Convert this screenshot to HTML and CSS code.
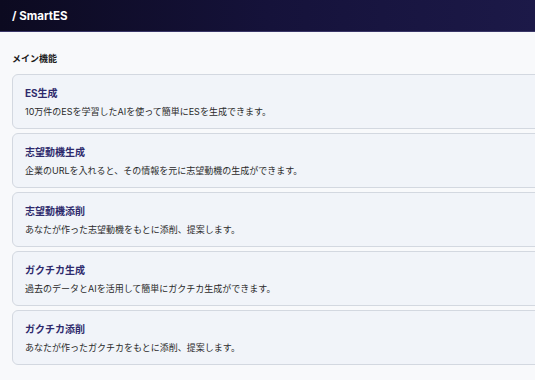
FILE: index.html
```html
<!DOCTYPE html>
<html lang="ja">
<head>
<meta charset="utf-8">
<title>SmartES</title>
<link rel="stylesheet" href="styles.css">
</head>
<body>
<header class="topbar">
  <span class="brand">/ SmartES</span>
</header>
<main class="main">
  <h2 class="section-title">メイン機能</h2>
  <div class="cards">
    <div class="card">
      <div class="card-title">ES生成</div>
      <div class="card-desc">10万件のESを学習したAIを使って簡単にESを生成できます。</div>
    </div>
    <div class="card">
      <div class="card-title">志望動機生成</div>
      <div class="card-desc">企業のURLを入れると、その情報を元に志望動機の生成ができます。</div>
    </div>
    <div class="card">
      <div class="card-title">志望動機添削</div>
      <div class="card-desc">あなたが作った志望動機をもとに添削、提案します。</div>
    </div>
    <div class="card">
      <div class="card-title">ガクチカ生成</div>
      <div class="card-desc">過去のデータとAIを活用して簡単にガクチカ生成ができます。</div>
    </div>
    <div class="card">
      <div class="card-title">ガクチカ添削</div>
      <div class="card-desc">あなたが作ったガクチカをもとに添削、提案します。</div>
    </div>
  </div>
</main>
</body>
</html>
```
FILE: styles.css
```css
html, body {
  margin: 0;
  padding: 0;
  overflow: hidden;
  background: #f8f9fb;
  font-family: "Inter", "Noto Sans CJK JP", sans-serif;
  height: 100%;
}
.topbar {
  height: 32px;
  box-sizing: border-box;
  background: linear-gradient(90deg, #0c0a20 0%, #15123a 50%, #1c1948 100%);
  border-bottom: 1px solid #3a3768;
  display: flex;
  align-items: center;
  padding-left: 12px;
}
.brand {
  color: #ffffff;
  font-weight: 700;
  font-size: 11.5px;
}
.main {
  padding: 20px 0 0 12px;
  overflow: hidden;
}
.section-title {
  margin: 0 0 8px 0;
  font-size: 9px;
  line-height: 14px;
  font-weight: 700;
  color: #1a1a1a;
}
.cards {
  display: flex;
  flex-direction: column;
  gap: 4px;
  width: calc(100% + 12px);
}
.card {
  background: #f1f4f9;
  border: 1px solid #d3d8e0;
  border-radius: 6px;
  padding: 11px 12px 9px 12px;
  display: flex;
  flex-direction: column;
  gap: 5px;
}
.card-title {
  font-size: 10px;
  line-height: 14px;
  font-weight: 700;
  color: #2e2a6c;
}
.card-desc {
  font-size: 9px;
  line-height: 14px;
  color: #2a2a2a;
}
```
